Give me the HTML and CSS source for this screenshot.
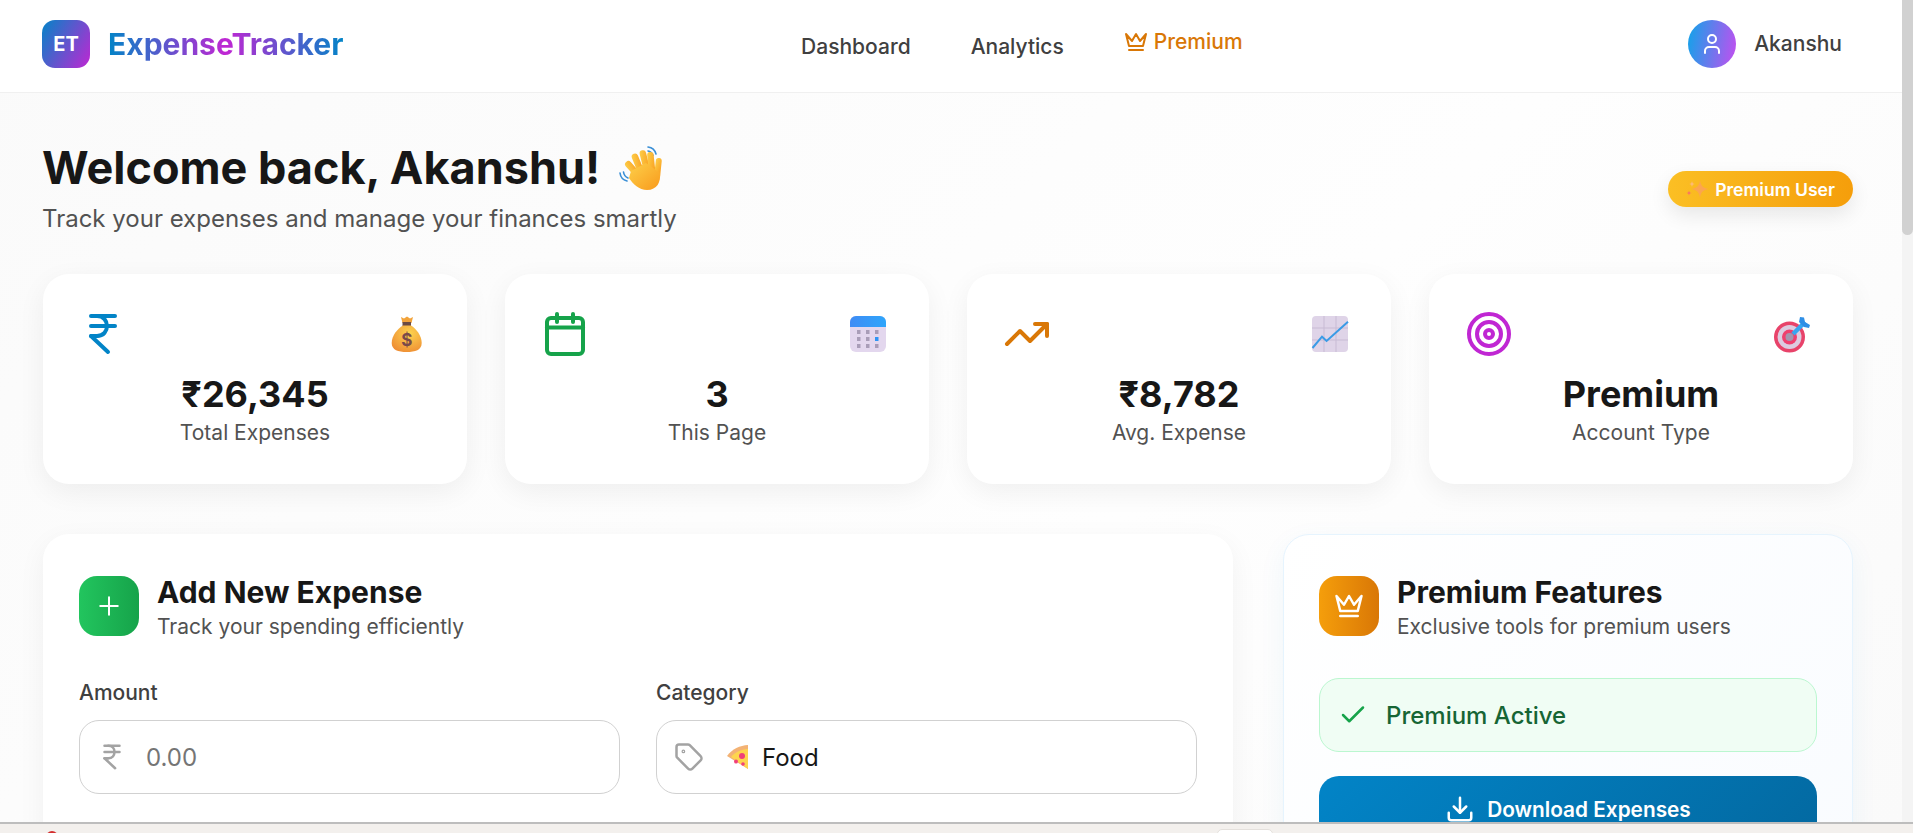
FILE: index.html
```html
<!DOCTYPE html>
<html lang="en">
<head>
<meta charset="utf-8">
<title>ExpenseTracker</title>
<link rel="stylesheet" href="styles.css">
</head>
<body>
<div class="window">
  <div class="page">
    <header class="topbar">
      <div class="brand">
        <div class="brand-mark">ET</div>
        <div class="brand-name">ExpenseTracker</div>
      </div>
      <nav class="nav">
        <a class="nav-link">Dashboard</a>
        <a class="nav-link">Analytics</a>
        <a class="nav-link nav-premium">
          <svg class="ic ic-24" viewBox="0 0 24 24"><path d="m2 4 3 12h14l3-12-6 7-4-7-4 7-6-7z"/><path d="M5 20h14"/></svg>
          Premium
        </a>
      </nav>
      <div class="user">
        <div class="avatar">
          <svg class="ic ic-24" viewBox="0 0 24 24"><path d="M19 21v-2a4 4 0 0 0-4-4H9a4 4 0 0 0-4 4v2"/><circle cx="12" cy="7" r="4"/></svg>
        </div>
        <span class="user-name">Akanshu</span>
      </div>
    </header>

    <main class="content">
      <section class="hero">
        <div>
          <h1 class="hero-title">Welcome back, Akanshu!
            <svg class="wave" viewBox="0 0 50 46">
              <defs><linearGradient id="hand" x1="0" y1="0" x2="1" y2="1"><stop offset="0" stop-color="#fdd04a"/><stop offset="1" stop-color="#f99a1c"/></linearGradient></defs>
              <g fill="none" stroke="#3a8fd6" stroke-width="1.6" stroke-linecap="round">
                <path d="M29 2c4 .5 7 3 8 7"/><path d="M29 6c2.500.4 4 2 5 4.500"/>
                <path d="M1 28c.5 4 3 7 7 8"/><path d="M4.500 27c.4 3 2 5 4.500 6"/>
              </g>
              <g fill="url(#hand)">
                <rect x="12" y="14" width="6.500" height="24" rx="3.200" transform="rotate(-42 15 26)"/>
                <rect x="16" y="8" width="6.500" height="24" rx="3.200" transform="rotate(-22 19 20)"/>
                <rect x="23" y="5" width="6.500" height="24" rx="3.200" transform="rotate(-14 26 18)"/>
                <rect x="29" y="7" width="6.500" height="24" rx="3.200" transform="rotate(-6 32 18)"/>
                <rect x="36" y="13" width="6" height="20" rx="3" transform="rotate(6 39 23)"/>
                <path d="M12 26 27 18l14 10c1 9-3 17-13 17-8 0-14-6-18-12z"/>
              </g>
            </svg>
          </h1>
          <p class="hero-sub">Track your expenses and manage your finances smartly</p>
        </div>
        <div class="pill">
          <svg class="sparkle" viewBox="0 0 24 18">
            <path d="M15 .5c1 5.500 3 7.500 8.500 8.500-5.500 1-7.500 3-8.500 8.500-1-5.500-3-7.500-8.500-8.500 5.500-1 7.500-3 8.500-8.500z" fill="#fca54f"/>
            <path d="M7 1c.4 2 1 2.600 3 3-2 .4-2.600 1-3 3-.4-2-1-2.600-3-3 2-.4 2.600-1 3-3z" fill="#fdba74"/>
            <path d="M4 10.500c.3 1.700.9 2.300 2.600 2.600-1.700.3-2.300.9-2.600 2.600-.3-1.700-.9-2.300-2.600-2.600 1.700-.3 2.300-.9 2.600-2.600z" fill="#f97366"/>
          </svg>
          Premium User
        </div>
      </section>

      <section class="stats">
        <article class="stat">
          <div class="stat-top">
            <svg class="ic ic-48 c-blue" viewBox="0 0 24 24"><path d="M6 3h12"/><path d="M6 8h12"/><path d="m6 13 8.500 8"/><path d="M6 13h3"/><path d="M9 13c6.667 0 6.667-10 0-10"/></svg>
            <svg class="emoji" viewBox="0 0 48 48">
              <defs><radialGradient id="bag" cx=".6" cy=".3" r=".8"><stop offset="0" stop-color="#fdd34f"/><stop offset="1" stop-color="#ee8a32"/></radialGradient></defs>
              <path d="M18 7l3 1.500 3-2 3 2 3-1.500-1.500 6h-9z" fill="#f2a33a"/>
              <rect x="19.500" y="12" width="8.500" height="4" fill="#6b4a42"/>
              <path d="M20 15.500h8c5 3 10.700 10 10.700 17.500 0 7-6.500 9-15 9s-15-2-15-9c0-7.500 6-14.500 11.300-17.500z" fill="url(#bag)"/>
              <text x="23.700" y="36" class="bag-sign">$</text>
            </svg>
          </div>
          <div class="stat-value">₹26,345</div>
          <div class="stat-label">Total Expenses</div>
        </article>
        <article class="stat">
          <div class="stat-top">
            <svg class="ic ic-48 c-green" viewBox="0 0 24 24"><rect x="3" y="4" width="18" height="18" rx="2"/><path d="M8 2v4"/><path d="M16 2v4"/><path d="M3 8.800h18"/></svg>
            <svg class="emoji" viewBox="0 0 48 48">
              <defs><linearGradient id="cal" x1="0" y1="0" x2="1" y2="0"><stop offset="0" stop-color="#3f8cf5"/><stop offset="1" stop-color="#2ea5fb"/></linearGradient></defs>
              <rect x="5" y="6" width="36" height="36" rx="6" fill="#e3d7ee"/>
              <path d="M5 17v-5a6 6 0 0 1 6-6h24a6 6 0 0 1 6 6v5z" fill="url(#cal)"/>
              <g fill="#a99db8">
                <rect x="12" y="20" width="3.500" height="4"/><rect x="21" y="20" width="3.500" height="4"/><rect x="30" y="20" width="3.500" height="4"/>
                <rect x="12" y="27" width="3.500" height="4"/><rect x="21" y="27" width="3.500" height="4"/>
                <rect x="12" y="34" width="3.500" height="4"/><rect x="21" y="34" width="3.500" height="4"/><rect x="30" y="34" width="3.500" height="4"/>
              </g>
              <rect x="30" y="27" width="3.500" height="4" fill="#2e95f5"/>
            </svg>
          </div>
          <div class="stat-value">3</div>
          <div class="stat-label">This Page</div>
        </article>
        <article class="stat">
          <div class="stat-top">
            <svg class="ic ic-48 c-amber" viewBox="0 0 24 24"><path d="M22 7l-8.500 8.500-5-5L2 17"/><path d="M16 7h6v6"/></svg>
            <svg class="emoji" viewBox="0 0 48 48">
              <rect x="5" y="6" width="36" height="36" rx="4" fill="#dfd4e8"/>
              <path d="M17 6v36M29 6v36M5 18h36M5 30h36" stroke="#c8bbd4" stroke-width="1" fill="none"/>
              <path d="M5.500 38 15 26.700l4.600 4.300L41 11.700" stroke="#3a9be6" stroke-width="2" fill="none"/>
            </svg>
          </div>
          <div class="stat-value">₹8,782</div>
          <div class="stat-label">Avg. Expense</div>
        </article>
        <article class="stat">
          <div class="stat-top">
            <svg class="ic ic-48 c-fuchsia" viewBox="0 0 24 24"><circle cx="12" cy="12" r="10"/><circle cx="12" cy="12" r="6"/><circle cx="12" cy="12" r="2"/></svg>
            <svg class="emoji" viewBox="0 0 48 48">
              <circle cx="20.500" cy="27" r="15.500" fill="#e8436a"/>
              <circle cx="20.500" cy="27" r="12" fill="#dccbe0"/>
              <circle cx="20.500" cy="27" r="7.500" fill="#ef3f6e"/>
              <circle cx="20.500" cy="27" r="4" fill="#a594ae"/>
              <path d="M24 24 36 12" stroke="#38a5f0" stroke-width="4.500" fill="none"/>
              <path d="M31 7l4 .5 1 4.500 5 3-1 3-5-1-5-5z" fill="#2f8fe6"/>
            </svg>
          </div>
          <div class="stat-value">Premium</div>
          <div class="stat-label">Account Type</div>
        </article>
      </section>

      <section class="panels">
        <article class="panel">
          <div class="panel-head">
            <div class="panel-icon bg-green">
              <svg class="ic ic-30 thin" viewBox="0 0 24 24"><path d="M5 12h14"/><path d="M12 5v14"/></svg>
            </div>
            <div>
              <h2 class="panel-title">Add New Expense</h2>
              <p class="panel-sub">Track your spending efficiently</p>
            </div>
          </div>
          <div class="form-row">
            <div class="field">
              <label class="field-label">Amount</label>
              <div class="input">
                <svg class="ic ic-30 c-muted" viewBox="0 0 24 24"><path d="M6 3h12"/><path d="M6 8h12"/><path d="m6 13 8.500 8"/><path d="M6 13h3"/><path d="M9 13c6.667 0 6.667-10 0-10"/></svg>
                <span class="placeholder">0.00</span>
              </div>
            </div>
            <div class="field">
              <label class="field-label">Category</label>
              <div class="input">
                <svg class="ic ic-30 c-muted" viewBox="0 0 24 24"><path d="M12.586 2.586A2 2 0 0 0 11.172 2H4a2 2 0 0 0-2 2v7.172a2 2 0 0 0 .586 1.414l8.704 8.704a2.426 2.426 0 0 0 3.420 0l6.580-6.580a2.426 2.426 0 0 0 0-3.420z"/><circle cx="7.500" cy="7.500" r=".5"/></svg>
                <svg class="pizza" viewBox="0 0 22 24">
                  <path d="M22 0v24L1 11C6 4 14 .5 22 0z" fill="#f3b274"/>
                  <path d="M22 4v20L5 12C9 7 15 4.500 22 4z" fill="#fed54e"/>
                  <circle cx="16" cy="11" r="3" fill="#f0407a"/><circle cx="10" cy="16.500" r="2" fill="#f0407a"/><circle cx="17" cy="19" r="1.800" fill="#f0407a"/>
                </svg>
                <span class="select-value">Food</span>
              </div>
            </div>
          </div>
        </article>

        <article class="panel panel-premium">
          <div class="panel-head">
            <div class="panel-icon bg-amber">
              <svg class="ic ic-30" viewBox="0 0 24 24"><path d="m2 4 3 12h14l3-12-6 7-4-7-4 7-6-7z"/><path d="M5 20h14"/></svg>
            </div>
            <div>
              <h2 class="panel-title">Premium Features</h2>
              <p class="panel-sub">Exclusive tools for premium users</p>
            </div>
          </div>
          <div class="status">
            <svg class="ic ic-30 c-green" viewBox="0 0 24 24"><path d="M20 6 9 17l-5-5"/></svg>
            Premium Active
          </div>
          <button class="download">
            <svg class="ic ic-30" viewBox="0 0 24 24"><path d="M21 15v4a2 2 0 0 1-2 2H5a2 2 0 0 1-2-2v-4"/><path d="M7 10l5 5 5-5"/><path d="M12 15V3"/></svg>
            Download Expenses
          </button>
        </article>
      </section>
    </main>
  </div>
  <div class="scrollbar"><div class="scroll-thumb"></div></div>
</div>
<footer class="shelf">
  <span class="shelf-dot"></span>
  <span class="shelf-tab"></span>
</footer>
</body>
</html>
```

FILE: styles.css
```css
* { box-sizing: border-box; }
html, body { margin: 0; height: 100%; overflow: hidden; }
body {
  display: flex;
  flex-direction: column;
  font-family: Inter, "Liberation Sans", sans-serif;
  color: #171717;
  background: #fff;
}

.window { flex: 1; min-height: 0; display: flex; }
.page {
  flex: 1;
  min-width: 0;
  overflow: hidden;
  background: linear-gradient(135deg, #fafafa 0%, #fefefe 60%, #fafafa 100%);
}
.scrollbar { width: 11px; background: #f4f4f4; }
.scroll-thumb { height: 235px; background: #d1d1d1; border-radius: 0 0 6px 6px; }

.shelf {
  flex: none;
  height: 11px;
  position: relative;
  overflow: hidden;
  background: #f3f0ed;
  border-top: 2px solid #bdbdbd;
}
.shelf-dot {
  position: absolute;
  left: 46px;
  top: 7px;
  width: 12px;
  height: 12px;
  border-radius: 50%;
  background: #d32f2f;
}
.shelf-tab {
  position: absolute;
  left: 1217px;
  top: 5px;
  width: 56px;
  height: 12px;
  border-radius: 5px 5px 0 0;
  background: #fff;
  border: 1px solid #e4e0dc;
}

.ic {
  flex: none;
  fill: none;
  stroke: currentColor;
  stroke-width: 2;
  stroke-linecap: round;
  stroke-linejoin: round;
}
.ic-24 { width: 24px; height: 24px; }
.ic-30 { width: 30px; height: 30px; }
.ic-48 { width: 48px; height: 48px; }
.c-blue { color: #0284c7; }
.c-green { color: #16a34a; }
.c-amber { color: #d97706; }
.c-fuchsia { color: #c026d3; }
.c-muted { color: #a3a3a3; }

.topbar {
  height: 93px;
  display: flex;
  align-items: center;
  justify-content: space-between;
  padding: 0 60px 4px 42px;
  background: #fff;
  border-bottom: 1px solid #f0f0f0;
}
.brand { display: flex; align-items: center; gap: 18px; }
.brand-mark {
  width: 48px;
  height: 48px;
  display: flex;
  align-items: center;
  justify-content: center;
  border-radius: 13px;
  background: linear-gradient(120deg, #0284c7, #c026d3);
  color: #fff;
  font-size: 20px;
  font-weight: 700;
}
.brand-name {
  font-size: 30px;
  font-weight: 700;
  color: transparent;
  background: linear-gradient(90deg, #0284c7 0%, #c026d3 50%, #0284c7 100%);
  -webkit-background-clip: text;
  background-clip: text;
}
.nav { display: flex; align-items: center; gap: 60px; margin: 5px 0 0 12px; font-size: 21px; font-weight: 500; }
.nav-link { color: #404040; }
.nav-premium {
  display: flex;
  align-items: center;
  gap: 6px;
  color: #d97706;
  margin-bottom: 10px;
}
.user { display: flex; align-items: center; gap: 18px; }
.avatar {
  width: 48px;
  height: 48px;
  display: flex;
  align-items: center;
  justify-content: center;
  border-radius: 50%;
  color: #fff;
  background: linear-gradient(100deg, #0ea5e9, #c64df0);
}
.user-name { font-size: 21px; font-weight: 500; color: #404040; margin-bottom: 1px; }

.content { padding: 48px 49px 0 43px; }
.hero { display: flex; align-items: center; justify-content: space-between; margin-left: -1px; }
.hero-title {
  margin: 0;
  font-size: 45px;
  line-height: 54px;
  font-weight: 700;
  color: #171717;
  display: flex;
  align-items: center;
  gap: 19px;
}
.wave { width: 50px; height: 46px; }
.hero-sub { margin: 7px 0 0; font-size: 24px; line-height: 33px; color: #525252; }
.pill {
  height: 36px;
  margin-top: 2px;
  display: flex;
  align-items: center;
  gap: 6px;
  padding: 0 18px 0 17px;
  border-radius: 18px;
  color: #fff;
  font-size: 17.6px;
  font-weight: 600;
  background: linear-gradient(90deg, #fbbf24, #f59e0b);
  box-shadow: 0 8px 20px rgba(0, 0, 0, .09);
}
.sparkle { width: 24px; height: 18px; flex: none; }

.stats {
  display: grid;
  grid-template-columns: repeat(4, 1fr);
  gap: 38px;
  margin-top: 39px;
}
.stat {
  height: 210px;
  padding: 36px 36px 0;
  background: #fff;
  border-radius: 26px;
  box-shadow: 0 8px 28px rgba(0, 0, 0, .06);
  text-align: center;
}
.stat-top { display: flex; align-items: center; justify-content: space-between; height: 48px; }
.emoji { width: 48px; height: 48px; flex: none; }
.bag-sign { font-family: Inter, sans-serif; font-size: 17px; font-weight: 700; fill: #7a4a4a; text-anchor: middle; }
.stat-value { margin-top: 13px; font-size: 36px; line-height: 46px; font-weight: 700; color: #171717; }
.stat-label { margin-top: 2px; font-size: 21px; line-height: 28px; color: #525252; }

.panels {
  display: grid;
  grid-template-columns: 1fr 570px;
  gap: 50px;
  margin-top: 50px;
  align-items: start;
}
.panel {
  padding: 38px 35px;
  height: 520px;
  background: #fff;
  border-radius: 26px;
  border: 1px solid transparent;
  box-shadow: 0 8px 28px rgba(0, 0, 0, .05);
}
.panel-premium {
  background: linear-gradient(135deg, #fff 0%, #f8fbff 100%);
  border-color: #e6f4fe;
  box-shadow: 0 8px 28px rgba(2, 132, 199, .06);
}
.panel-head { display: flex; align-items: center; gap: 18px; }
.panel-icon {
  width: 60px;
  height: 60px;
  flex: none;
  display: flex;
  align-items: center;
  justify-content: center;
  border-radius: 18px;
  color: #fff;
}
.bg-green { background: linear-gradient(90deg, #22c55e, #16a34a); }
.bg-amber { background: linear-gradient(90deg, #f59e0b, #d97706); }
.thin { stroke-width: 1.6; }
.panel-title { margin: 0; font-size: 30px; line-height: 38px; font-weight: 700; color: #171717; }
.panel-sub { margin: 4px 0 0; font-size: 21px; line-height: 24px; color: #525252; }

.form-row { display: grid; grid-template-columns: 1fr 1fr; gap: 36px; margin-top: 40px; }
.field-label { display: block; font-size: 21px; line-height: 28px; font-weight: 500; color: #404040; margin-bottom: 13px; }
.input {
  height: 74px;
  display: flex;
  align-items: center;
  padding: 0 17px;
  border: 1px solid #d1d1d1;
  border-radius: 20px;
  background: #fff;
}
.placeholder { margin-left: 19px; font-size: 24px; color: #757575; }
.pizza { width: 22px; height: 24px; margin-left: 22px; flex: none; }
.select-value { margin-left: 14px; font-size: 24px; color: #171717; }

.status {
  height: 74px;
  margin-top: 39px;
  display: flex;
  align-items: center;
  gap: 18px;
  padding: 0 18px;
  background: #f0fdf4;
  border: 1px solid #bbf7d0;
  border-radius: 20px;
  color: #166534;
  font-size: 24px;
  font-weight: 500;
}
.download {
  width: 100%;
  height: 66px;
  margin-top: 24px;
  display: flex;
  align-items: center;
  justify-content: center;
  gap: 12px;
  border: 0;
  border-radius: 20px;
  color: #fff;
  font-family: inherit;
  font-size: 20.8px;
  font-weight: 600;
  background: linear-gradient(135deg, #0284c7, #0369a1);
}
```
